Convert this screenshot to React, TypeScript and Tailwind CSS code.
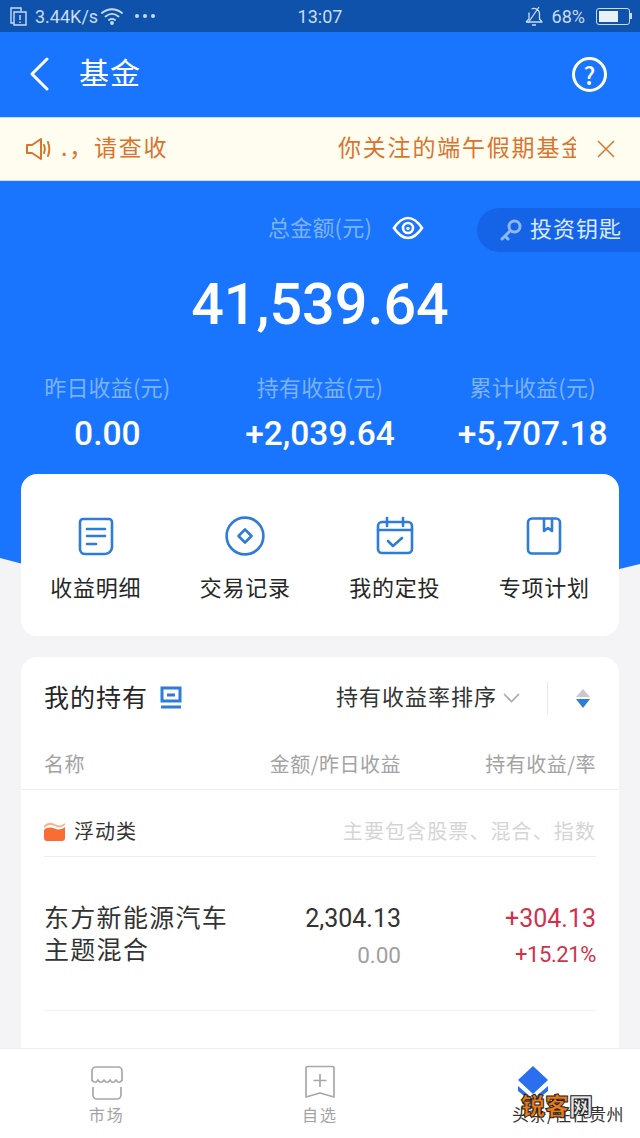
import React from "react";

const CJK = "font-['Noto_Sans_CJK_SC',sans-serif]";
const NUM = "font-['Roboto',sans-serif]";

function Stat({ label, value }: { label: string; value: string }) {
  return (
    <div className="flex flex-col items-center">
      <div className="-translate-y-[2px] text-[22px] leading-[30px] tracking-[0.2px] whitespace-nowrap text-[#7db2f8]">{label}</div>
      <div className={`${NUM} mt-[11px] text-[33.5px] leading-[40px] font-medium text-white`}>{value}</div>
    </div>
  );
}

const blue = "#2f7bd8";

function QuickIcon({ kind }: { kind: number }) {
  return (
    <svg width="40" height="40" viewBox="0 0 40 40" fill="none" stroke={blue} strokeWidth="2.6" strokeLinecap="round" strokeLinejoin="round">
      {kind === 0 && (
        <>
          <path d="M7 3h26a3 3 0 0 1 3 3v25a7 7 0 0 1-7 7H9a5 5 0 0 1-5-5V6a3 3 0 0 1 3-3z" />
          <path d="M11 13h18M11 20h18M11 28h9" />
        </>
      )}
      {kind === 1 && (
        <>
          <circle cx="20" cy="20" r="18.4" />
          <path d="M20 13.500l6.500 6.500-6.500 6.500-6.500-6.500z" />
        </>
      )}
      {kind === 2 && (
        <>
          <rect x="3" y="6" width="34" height="31" rx="4" />
          <path d="M3 14h34M12 2v8M28 2v8M13 25l5 5 9-8" />
        </>
      )}
      {kind === 3 && (
        <>
          <rect x="4" y="2.500" width="32" height="35" rx="4" />
          <path d="M20 3v12l4-3 4 3V3" />
        </>
      )}
    </svg>
  );
}

function Quick({ kind, label }: { kind: number; label: string }) {
  return (
    <div className="flex flex-col items-center">
      <QuickIcon kind={kind} />
      <div className="mt-[15px] text-[22px] leading-[30px] tracking-[0.8px] text-[#262626]">{label}</div>
    </div>
  );
}

export default function App() {
  return (
    <div className={`${CJK} flex h-[1138px] w-[640px] flex-col overflow-hidden bg-[#f4f4f6]`}>
      {/* status bar */}
      <div className={`${NUM} flex h-8 shrink-0 items-center justify-between bg-[#0f52ab] pr-2 pl-[10px] text-[18px] text-[#c9dcf5]`}>
        <div className="flex w-[200px] items-center">
          <svg width="17" height="19" viewBox="0 0 17 19" fill="none" stroke="#c9dcf5" strokeWidth="1.4">
            <path d="M1 3V1h10v3M1 1v15h3M4 5h12v13H4z" />
            <path d="M10 8v5M10 14.500v1.500" />
          </svg>
          <span className="ml-[8px] w-[63px]">3.44K/s</span>
          <svg className="ml-[3px]" width="22" height="18" viewBox="0 0 22 18" fill="none" stroke="#c9dcf5" strokeWidth="1.8" strokeLinecap="round">
            <path d="M1 6c6-5 14-5 20 0M4.500 9.500c4-3.200 9-3.200 13 0M8 13c2-1.500 4-1.500 6 0" />
            <circle cx="11" cy="16" r="1" fill="#c9dcf5" />
          </svg>
          <div className="ml-[12px] flex gap-[4px]">
            <span className="h-[4px] w-[4px] rounded-full bg-[#c9dcf5]" />
            <span className="h-[4px] w-[4px] rounded-full bg-[#c9dcf5]" />
            <span className="h-[4px] w-[4px] rounded-full bg-[#c9dcf5]" />
          </div>
        </div>
        <div className="-ml-[2px]">13:07</div>
        <div className="flex w-[200px] items-center justify-end">
          <svg width="18" height="20" viewBox="0 0 18 20" fill="none" stroke="#c9dcf5" strokeWidth="1.300" strokeLinejoin="round">
            <path d="M1 16h16l-2.500-3V8a5.500 5.500 0 0 0-8-5M4 6.500V13l-3 3M7 19h4M3 17L14 1" />
          </svg>
          <span className="ml-[9px]">68%</span>
          <div className="ml-[11px] flex h-[17px] w-[34px] items-center rounded-[3px] border border-[#c9dcf5] p-[2px]">
            <div className="h-full w-[68%] bg-[#e8f0fb]" />
          </div>
          <span className="h-[6px] w-[2px] bg-[#c9dcf5]" />
        </div>
      </div>

      {/* header */}
      <div className="flex h-[85px] shrink-0 items-center justify-between bg-[#1a75fe] pr-[33px] pl-[29px] text-white">
        <div className="flex items-center">
          <svg className="-mt-[2px]" width="20" height="34" viewBox="0 0 20 34" fill="none" stroke="#fff" strokeWidth="3" strokeLinecap="round" strokeLinejoin="round">
            <path d="M18 2L3 17l15 15" />
          </svg>
          <span className="ml-[30px] -translate-y-[4px] text-[30px] leading-[40px] tracking-[1px]">基金</span>
        </div>
        <div className="flex h-[35px] w-[35px] items-center justify-center rounded-full border-[3px] border-white text-[24px] leading-none font-medium">?</div>
      </div>

      {/* notice */}
      <div className="flex h-[64px] shrink-0 items-center border-y border-[#cfe0fb] bg-[#fffdf0] pr-[25px] pl-[26px] text-[#d9742f]">
        <svg className="-mt-[1px]" width="25" height="24" viewBox="0 0 25 24" fill="none" stroke="#d9742f" strokeWidth="2" strokeLinejoin="round" strokeLinecap="round">
          <path d="M1 8h5l9-6v20l-9-6H1z" />
          <path d="M18 8c1 2.500 1 5.500 0 8M22 5c1.500 4 1.500 10 0 14" />
        </svg>
        <div className="ml-[10px] w-[515px] -translate-y-[3px] overflow-hidden text-[23px] leading-[32px] tracking-[1.800px] whitespace-nowrap">
          <div className="flex">
            <span className="w-[277px] shrink-0">.，请查收</span>
            <span>你关注的端午假期基金</span>
          </div>
        </div>
        <svg className="ml-[21px] -mt-[1px]" width="18" height="18" viewBox="0 0 18 18" stroke="#d9742f" strokeWidth="1.500">
          <path d="M1 1l16 16M17 1L1 17" />
        </svg>
      </div>

      {/* hero */}
      <div className="relative flex h-[377px] shrink-0 flex-col bg-[#1a75fe]">
        <svg className="absolute top-full left-0" width="640" height="50" viewBox="0 0 640 50">
          <path d="M0 0H640V6Q320 88 0 0z" fill="#1a75fe" />
        </svg>
        <div className="relative mt-[27px] flex h-[44px] items-center">
          <span className="ml-[268px] -translate-y-[4px] text-[22px] leading-none tracking-[0.2px] whitespace-nowrap text-[#7db2f8]">总金额(元)</span>
          <svg className="ml-[20px] -translate-y-[2px]" width="32" height="24" viewBox="0 0 32 24" fill="none" stroke="#fff" strokeWidth="2.600">
            <path d="M2 12C7 4.500 11 2 16 2s9 2.500 14 10c-5 7.500-9 10-14 10S7 19.500 2 12z" />
            <circle cx="16" cy="12" r="5" />
            <circle cx="16" cy="12.500" r="1.800" fill="#fff" stroke="none" />
          </svg>
          <div className="absolute top-0 right-0 flex h-[44px] w-[163px] items-center rounded-l-full bg-[#1564e8] pl-[22px]">
            <svg width="24" height="24" viewBox="0 0 24 24" fill="none" stroke="#8db9f5" strokeWidth="3" strokeLinecap="round">
              <circle cx="15.500" cy="8.500" r="5.500" />
              <path d="M11 13L3 21M6 18l3 3" />
            </svg>
            <span className="ml-[7px] -translate-y-[3px] text-[22px] leading-none tracking-[1px] whitespace-nowrap text-[#dceaff]">投资钥匙</span>
          </div>
        </div>
        <div className={`${NUM} mt-[18px] text-center text-[57.500px] leading-[70px] font-medium text-white`}>41,539.64</div>
        <div className="mt-[33px] grid grid-cols-3 px-[1px]">
          <Stat label="昨日收益(元)" value="0.00" />
          <Stat label="持有收益(元)" value="+2,039.64" />
          <Stat label="累计收益(元)" value="+5,707.18" />
        </div>
      </div>

      {/* shortcuts */}
      <div className="relative mx-[21px] -mt-[84px] grid h-[162px] shrink-0 grid-cols-4 rounded-[16px] bg-white pt-[42px]">
        <Quick kind={0} label="收益明细" />
        <Quick kind={1} label="交易记录" />
        <Quick kind={2} label="我的定投" />
        <Quick kind={3} label="专项计划" />
      </div>

      {/* holdings */}
      <div className="mx-[21px] mt-[21px] min-h-0 flex-1 overflow-hidden rounded-t-[16px] bg-white">
        <div className="flex h-[82px] items-center pr-[29px] pl-[23px]">
          <span className="-translate-y-[2px] text-[25px] leading-none tracking-[1px] text-[#262626]">我的持有</span>
          <svg className="ml-[11px] -translate-y-[1px]" width="24" height="24" viewBox="0 0 24 24" fill="none" stroke={blue} strokeWidth="3">
            <path d="M3 3h18v13H3zM8 10h8M2 22h20" />
          </svg>
          <span className="ml-[153px] -translate-y-[3px] text-[22px] leading-none tracking-[1px] text-[#333]">持有收益率排序</span>
          <svg className="ml-[6px]" width="17" height="10" viewBox="0 0 17 10" fill="none" stroke="#aaa" strokeWidth="1.600">
            <path d="M1 1l7.500 7.500L16 1" />
          </svg>
          <span className="ml-[27px] h-[32px] w-px bg-[#e8e8e8]" />
          <div className="ml-[28px] flex flex-col gap-[2px]">
            <span className="h-0 w-0 border-x-[7px] border-b-[8px] border-x-transparent border-b-[#c9c9c9]" />
            <span className="h-0 w-0 border-x-[7px] border-t-[9px] border-x-transparent border-t-[#2f7bd8]" />
          </div>
        </div>
        <div className="grid h-[51px] grid-cols-[213px_144px_195px] items-center border-b border-[#efefef] pl-[23px] text-[20px] tracking-[0.5px] text-[#a3a3a3]">
          <span>名称</span>
          <span className="text-right whitespace-nowrap">金额/昨日收益</span>
          <span className="text-right whitespace-nowrap">持有收益/率</span>
        </div>
        <div className="mx-[23px] flex h-[67px] items-center justify-between border-b border-[#efefef] pt-[15px]">
          <div className="flex items-center">
            <svg width="21" height="20" viewBox="0 0 21 20">
              <path d="M0 5c3-4 7-4 10.500-2s7 2 10.500-1v2C17 7 14 7 10.500 5S3 4 0 7z" fill="#f9b48f" />
              <path d="M0 9c3-3 7-3 10.500-1.500S17 9 21 6v11a3 3 0 0 1-3 3H3a3 3 0 0 1-3-3z" fill="#f96c33" />
            </svg>
            <span className="ml-[9px] text-[20px] tracking-[1px] text-[#333]">浮动类</span>
          </div>
          <span className="text-[20px] tracking-[1.100px] whitespace-nowrap text-[#d5d5d5]">主要包含股票、混合、指数</span>
        </div>
        <div className="mx-[23px] flex h-[154px] items-start justify-between border-b border-[#f2f2f2] pt-[43px]">
          <div className="w-[200px] text-[25px] leading-[32px] tracking-[1.300px] text-[#333]">东方新能源汽车<br />主题混合</div>
          <div className={`${NUM} ml-[60px] flex w-[97px] flex-col items-end whitespace-nowrap`}>
            <span className="mt-[2px] text-[25px] leading-[34px] text-[#333]">2,304.13</span>
            <span className="mt-[4px] text-[22.500px] leading-[30px] text-[#a0a0a0]">0.00</span>
          </div>
          <div className={`${NUM} flex flex-1 flex-col items-end whitespace-nowrap`}>
            <span className="mt-[2px] text-[25px] leading-[34px] text-[#d1314b]">+304.13</span>
            <span className="mt-[4px] text-[22px] leading-[30px] tracking-[-0.4px] text-[#d1314b]">+15.21%</span>
          </div>
        </div>
      </div>

      {/* bottom nav */}
      <div className="relative grid h-[90px] shrink-0 grid-cols-3 border-t border-[#eeeeee] bg-white pt-[16px]">
        <div className="flex flex-col items-center">
          <svg width="34" height="35" viewBox="0 0 34 35" fill="none" stroke="#a8a8a8" strokeWidth="1.700" strokeLinejoin="round">
            <path d="M2 16V6a4 4 0 0 1 4-4h22a4 4 0 0 1 4 4v10" />
            <path d="M2 15c2 3 4 3 6 0 2 3 4 3 6 0 2 3 4 3 6 0 2 3 4 3 6 0 2 3 4 3 6 0" />
            <path d="M3 22v8a4 4 0 0 0 4 4h20a4 4 0 0 0 4-4v-8" />
          </svg>
          <span className="mt-[3px] text-[16px] leading-[22px] tracking-[2px] text-[#a3a3a3]">市场</span>
        </div>
        <div className="flex flex-col items-center">
          <svg width="32" height="35" viewBox="0 0 32 35" fill="none" stroke="#a8a8a8" strokeWidth="1.700" strokeLinejoin="round">
            <path d="M2 3a1.500 1.500 0 0 1 1.500-1.500h25A1.500 1.500 0 0 1 30 3v29l-14-4-14 4z" />
            <path d="M16 9v13M9.500 15.500h13" />
          </svg>
          <span className="mt-[3px] text-[16px] leading-[22px] tracking-[2px] text-[#a3a3a3]">自选</span>
        </div>
        <div className="flex flex-col items-center">
          <svg width="32" height="36" viewBox="0 0 32 36">
            <path d="M16 1l15 14-15 14L1 15z" fill="#2a6fef" />
            <path d="M1 21l15 13 15-13v5L16 38 1 26z" fill="#2a6fef" />
          </svg>
        </div>
        {/* watermark */}
        <div className="absolute top-[53px] right-[15px] w-[114px] text-center text-[17px] leading-[24px] tracking-[0.5px] whitespace-nowrap text-[#333]">头条/住在贵州</div>
        <div className="absolute top-[42px] right-[47px] text-[24px] leading-[28px] font-black text-[#f07a10] [-webkit-text-stroke:1px_#222]">
          锐客<span className="text-[#e8e8e8]">网</span>
        </div>
      </div>
    </div>
  );
}
